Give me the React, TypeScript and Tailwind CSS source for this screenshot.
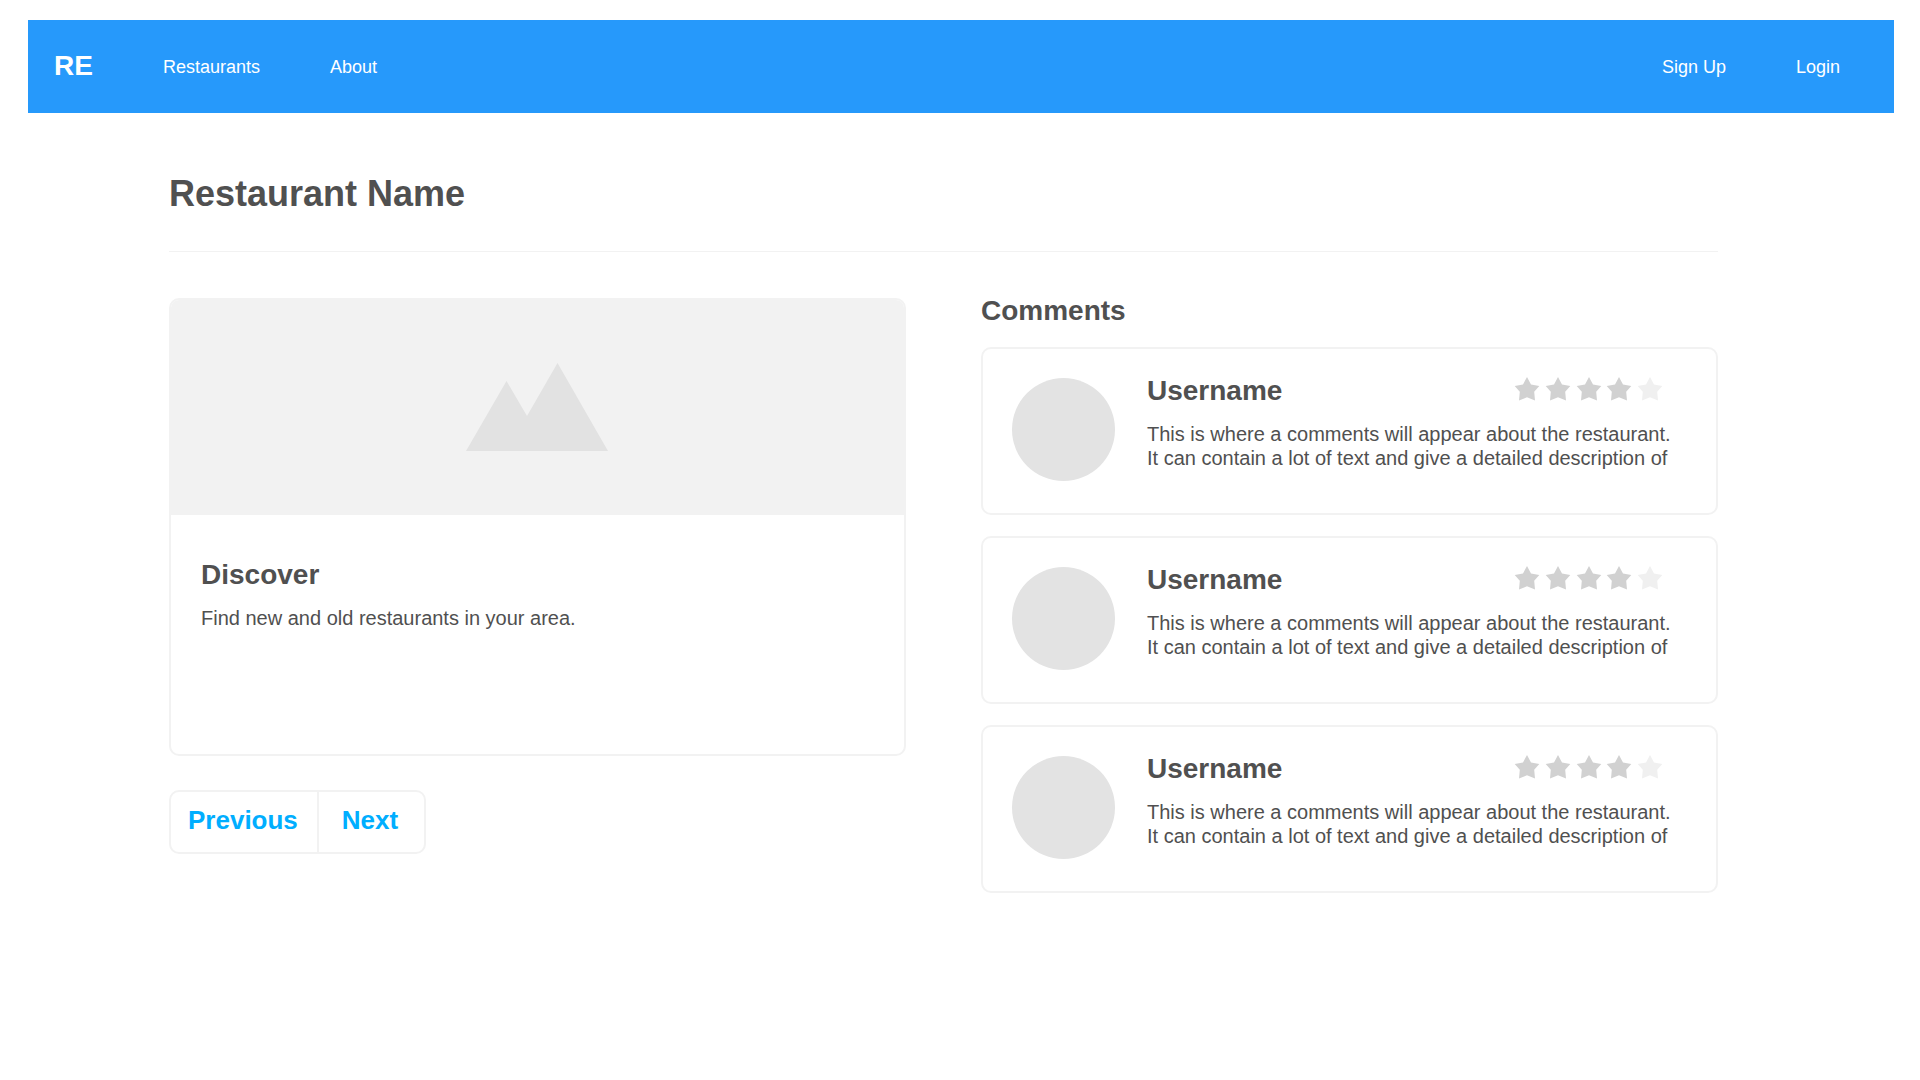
import React from "react";

const comments = [1, 2, 3].map((id) => ({
  id,
  user: "Username",
  rating: 4,
  text: "This is where a comments will appear about the restaurant. It can contain a lot of text and give a detailed description of",
}));

function Star({ filled }: { filled: boolean }) {
  return (
    <svg
      viewBox="0 0 24 24"
      className={filled ? "size-6 overflow-visible fill-[#d1d1d1]" : "size-6 overflow-visible fill-[#f0f0f0]"}
      aria-hidden="true"
    >
      <path d="M12 0 L16 7.4 L24.3 9 L19.2 14.8 L20 23.6 L12 20.3 L4 23.6 L4.8 14.8 L-0.3 9 L8 7.4 Z" />
    </svg>
  );
}

function Rating({ value }: { value: number }) {
  return (
    <div role="img" aria-label={`${value} out of 5 stars`} className="mr-[14px] flex w-[147px] shrink-0 justify-between pt-0.5">
      {[1, 2, 3, 4, 5].map((n) => (
        <Star key={n} filled={n <= value} />
      ))}
    </div>
  );
}

function Comment({ user, rating, text }: { user: string; rating: number; text: string }) {
  return (
    <li className="flex min-h-[168px] gap-8 rounded-[10px] border-2 border-[#f2f2f2] pl-[29px] pr-10">
      <div className="mt-[29px] size-[103px] shrink-0 rounded-full bg-[#e3e3e3]" />
      <div className="min-w-0 flex-1 pt-[26px]">
        <div className="flex items-start justify-between">
          <h3 className="text-[28px] leading-8 font-bold">{user}</h3>
          <Rating value={rating} />
        </div>
        <p className="mt-[15px] text-xl leading-6">{text}</p>
      </div>
    </li>
  );
}

export default function App() {
  return (
    <div className="min-h-screen bg-white pt-5 font-['Liberation_Sans',Arial,sans-serif] text-[#505050]">
      <nav className="mr-[26px] ml-7 flex h-[93px] items-center gap-[70px] bg-[#2699fb] pr-[54px] pl-[26px] text-lg leading-6 text-white">
        <a href="#" className="pb-px text-[28px] leading-8 font-bold">RE</a>
        <a href="#restaurants">Restaurants</a>
        <a href="#about">About</a>
        <a href="#signup" className="ml-auto">Sign Up</a>
        <a href="#login">Login</a>
      </nav>

      <main className="pt-[61px] pr-[202px] pl-[169px]">
        <h1 className="text-4xl font-bold">Restaurant Name</h1>
        <hr className="mt-[37px] border-[#f2f2f2]" />

        <div className="mt-[43px] grid grid-cols-2 gap-x-[75px]">
          <section className="pt-[3px]">
            <article className="overflow-hidden rounded-[10px] border-2 border-[#f2f2f2]">
              <div className="flex h-[215px] items-center justify-center bg-[#f2f2f2] pr-0.5 pb-0.5">
                <svg viewBox="0 0 142 88" className="h-[88px] w-[142px] fill-[#e2e2e2]" aria-hidden="true">
                  <path d="M0 88 L40.5 18 L61 53 L91.5 0 L142 88 Z" />
                </svg>
              </div>
              <div className="min-h-[239px] px-[30px] pt-11">
                <h2 className="text-[28px] leading-8 font-bold">Discover</h2>
                <p className="mt-[15px] text-xl leading-6">Find new and old restaurants in your area.</p>
              </div>
            </article>

            <div className="mt-[34px] inline-flex rounded-[10px] border-2 border-[#f2f2f2] text-[26px] leading-8 font-bold text-[#00aeff]">
              <button type="button" className="border-r-2 border-[#f2f2f2] pt-3 pr-[19px] pb-4 pl-[17px]">Previous</button>
              <button type="button" className="pt-3 pr-[26px] pb-4 pl-[23px]">Next</button>
            </div>
          </section>

          <section>
            <h2 className="text-[28px] leading-8 font-bold">Comments</h2>
            <ul className="mt-5 flex flex-col gap-[21px]">
              {comments.map((c) => (
                <Comment key={c.id} user={c.user} rating={c.rating} text={c.text} />
              ))}
            </ul>
          </section>
        </div>
      </main>
    </div>
  );
}
